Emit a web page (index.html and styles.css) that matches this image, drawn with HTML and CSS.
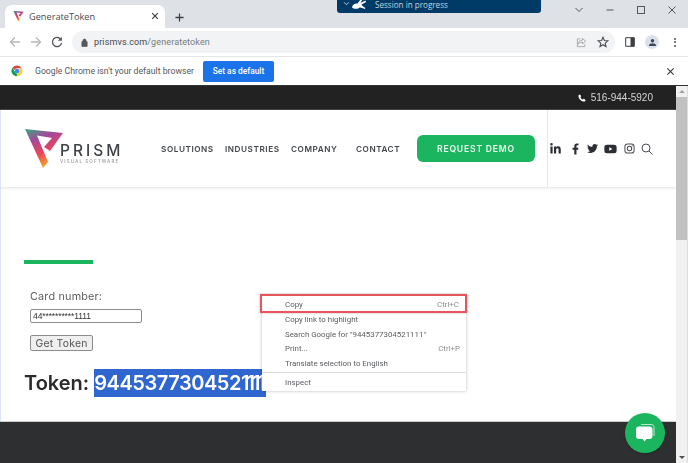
FILE: index.html
```html
<!DOCTYPE html>
<html lang="en">
<head>
<meta charset="utf-8">
<title>GenerateToken</title>
<link rel="stylesheet" href="styles.css">
</head>
<body>
<div class="window">
  <header class="tabstrip">
    <div class="tab">
      <svg class="favicon" viewBox="24 128 40 41"><defs><linearGradient id="fav" x1="0.1" y1="0" x2="0.5" y2="1"><stop offset="0" stop-color="#3fa17c"/><stop offset="0.3" stop-color="#a5489c"/><stop offset="0.65" stop-color="#e9465a"/><stop offset="1" stop-color="#f8ac25"/></linearGradient></defs><path fill="url(#fav)" d="M25 129L63 133L50 151L44 147L52 138L37 135.5L48 162L43 168Z"/></svg>
      <span class="tab-title">GenerateToken</span>
      <svg class="tab-close" viewBox="0 0 10 10"><path d="M1.5 1.5L8.5 8.5M8.5 1.5L1.5 8.5"/></svg>
    </div>
    <svg class="new-tab" viewBox="0 0 10 10"><path d="M5 0.5V9.5M0.5 5H9.5"/></svg>
    <div class="win-controls">
      <svg class="win-icon" viewBox="0 0 10 10"><path d="M1.5 3L5 6.5L8.5 3"/></svg>
      <svg class="win-icon" viewBox="0 0 10 10"><path d="M1.5 5H8.5"/></svg>
      <svg class="win-icon" viewBox="0 0 10 10"><rect x="1.5" y="1.5" width="7" height="7"/></svg>
      <svg class="win-icon" viewBox="0 0 10 10"><path d="M1.5 1.5L8.5 8.5M8.5 1.5L1.5 8.5"/></svg>
    </div>
  </header>

  <div class="session">
    <svg class="session-chev" viewBox="0 0 8 6"><path d="M1 1.5L4 4.5L7 1.5"/></svg>
    <svg class="session-icon" viewBox="0 0 14 10"><path d="M0 8.5C0.5 5.5 3 4 5.5 4.5L9 0L10.5 0.5L8.5 4L13.5 1.5L14 3L9.5 5.5C10 7 12 8 13.5 9L12.5 10C10.5 9 9 8.5 7.5 8.5C7 10 1.5 10.5 0 8.5Z"/></svg>
    <span>Session in progress</span>
  </div>

  <nav class="toolbar">
    <svg class="tb-icon faint" viewBox="0 0 12 12"><path d="M11 6H1.5M6 1.5L1.5 6L6 10.5"/></svg>
    <svg class="tb-icon faint" viewBox="0 0 12 12"><path d="M1 6H10.5M6 1.5L10.5 6L6 10.5"/></svg>
    <svg class="tb-icon dark" viewBox="0 0 12 12"><path d="M10.2 4A4.6 4.6 0 1 0 10.6 6.8"/><path class="solid" d="M10.8 0.8V4.8H6.8Z"/></svg>
    <div class="omnibox">
      <svg class="lock" viewBox="0 0 8 10"><path d="M1 4H7V9.5H1Z M2.2 4V2.8A1.8 1.8 0 0 1 5.8 2.8V4" /></svg>
      <span class="url"><span class="host">prismvs.com</span>/generatetoken</span>
      <svg class="omni-share" viewBox="0 0 12 12"><path d="M7 1.5L10.5 4.5L7 7.5V5.6C4.5 5.6 3.2 6.5 2.2 8C2.4 5.3 4 3.6 7 3.4ZM4.5 2H1.5V10.5H9.5V8"/></svg>
      <svg class="omni-star" viewBox="0 0 12 12"><path d="M6 1.3L7.4 4.5L10.8 4.8L8.2 7.1L9 10.5L6 8.7L3 10.5L3.8 7.1L1.2 4.8L4.6 4.5Z"/></svg>
    </div>
    <div class="tb-right">
      <svg class="panel" viewBox="0 0 10 10"><path d="M0.7 0.7H9.3V9.3H0.7Z"/><path class="solid" d="M5.5 0.7H9.3V9.3H5.5Z"/></svg>
      <div class="avatar"><svg viewBox="0 0 10 10"><circle cx="5" cy="3.1" r="2"/><path d="M1 9C1 6.5 3 5.8 5 5.8S9 6.5 9 9Z"/></svg></div>
      <div class="kebab"><i></i><i></i><i></i></div>
    </div>
  </nav>

  <aside class="infobar">
    <svg class="chrome" viewBox="0 0 24 24">
      <path fill="#db4437" d="M12 1A11 11 0 0 1 21.5 6.5H12A5.5 5.5 0 0 0 6.8 10.2L3.2 5.3A11 11 0 0 1 12 1Z"/>
      <path fill="#0f9d58" d="M3.2 5.3L8 13.8A5.5 5.5 0 0 0 13.6 17.3L10.6 22.9A11 11 0 0 1 3.2 5.3Z"/>
      <path fill="#ffcd40" d="M21.5 6.5A11 11 0 0 1 10.6 22.9L15.4 14.5A5.5 5.5 0 0 0 15.6 8Z"/>
      <circle cx="12" cy="12" r="4.4" fill="#4285f4"/>
    </svg>
    <span class="info-text">Google Chrome isn't your default browser</span>
    <button class="set-default">Set as default</button>
    <svg class="info-close" viewBox="0 0 10 10"><path d="M1.5 1.5L8.5 8.5M8.5 1.5L1.5 8.5"/></svg>
  </aside>

  <div class="viewport">
    <div class="page">
      <div class="topbar">
        <svg class="phone" viewBox="0 0 10 10"><path d="M2.5 0.5L4 2.8L3 4C3.6 5.2 4.8 6.4 6 7L7.2 6L9.5 7.5C9.3 8.6 8.5 9.5 7.5 9.5C4 9.2 0.8 6 0.5 2.5C0.5 1.5 1.4 0.7 2.5 0.5Z"/></svg>
        <span>516-944-5920</span>
      </div>
      <div class="nav">
        <div class="logo">
          <svg class="logo-mark" viewBox="24 128 40 41"><defs><linearGradient id="lg" x1="0.1" y1="0" x2="0.5" y2="1"><stop offset="0" stop-color="#3fa17c"/><stop offset="0.3" stop-color="#a5489c"/><stop offset="0.65" stop-color="#e9465a"/><stop offset="1" stop-color="#f8ac25"/></linearGradient></defs><path fill="url(#lg)" d="M25 129L63 133L50 151L44 147L52 138L37 135.5L48 162L43 168Z"/></svg>
          <div class="logo-text">
            <div class="logo-name">PRISM</div>
            <div class="logo-sub">VISUAL SOFTWARE</div>
          </div>
        </div>
        <ul class="menu">
          <li class="m-solutions">SOLUTIONS</li>
          <li class="m-industries">INDUSTRIES</li>
          <li class="m-company">COMPANY</li>
          <li class="m-contact">CONTACT</li>
        </ul>
        <a class="demo">REQUEST DEMO</a>
        <div class="socials">
          <svg class="s-in" viewBox="0 0 448 512"><path d="M100.28 448H7.4V148.9h92.88zM53.79 108.1C24.09 108.1 0 83.5 0 53.8a53.79 53.79 0 0 1 107.58 0c0 29.7-24.1 54.3-53.79 54.3zM447.9 448h-92.68V302.4c0-34.7-.7-79.2-48.29-79.2-48.29 0-55.69 37.7-55.69 76.7V448h-92.78V148.9h89.08v40.8h1.3c12.4-23.5 42.69-48.3 87.88-48.3 94 0 111.28 61.9 111.28 142.3V448z"/></svg>
          <svg class="s-f" viewBox="0 0 320 512"><path d="M279.14 288l14.22-92.66h-88.91v-60.13c0-25.35 12.42-50.06 52.24-50.06h40.42V6.26S260.43 0 225.36 0c-73.22 0-121.08 44.38-121.08 124.72v70.62H22.89V288h81.39v224h100.17V288z"/></svg>
          <svg class="s-tw" viewBox="0 0 512 512"><path d="M459.37 151.716c.325 4.548.325 9.097.325 13.645 0 138.72-105.583 298.558-298.558 298.558-59.452 0-114.68-17.219-161.137-47.106 8.447.974 16.568 1.299 25.34 1.299 49.055 0 94.213-16.568 130.274-44.832-46.132-.975-84.792-31.188-98.112-72.772 6.498.974 12.995 1.624 19.818 1.624 9.421 0 18.843-1.3 27.614-3.573-48.081-9.747-84.143-51.98-84.143-102.985v-1.299c13.969 7.797 30.214 12.67 47.431 13.319-28.264-18.843-46.781-51.005-46.781-87.391 0-19.492 5.197-37.36 14.294-52.954 51.655 63.675 129.3 105.258 216.365 109.807-1.624-7.797-2.599-15.918-2.599-24.04 0-57.828 46.782-104.934 104.934-104.934 30.213 0 57.502 12.67 76.67 33.137 23.715-4.548 46.456-13.32 66.599-25.34-7.798 24.366-24.366 44.833-46.132 57.827 21.117-2.273 41.584-8.122 60.426-16.243-14.292 20.791-32.161 39.308-52.628 54.253z"/></svg>
          <svg class="s-yt" viewBox="0 0 576 512"><path d="M549.655 124.083c-6.281-23.65-24.787-42.276-48.284-48.597C458.781 64 288 64 288 64S117.22 64 74.629 75.486c-23.497 6.322-42.003 24.947-48.284 48.597-11.412 42.867-11.412 132.305-11.412 132.305s0 89.438 11.412 132.305c6.281 23.65 24.787 41.5 48.284 47.821C117.22 448 288 448 288 448s170.78 0 213.371-11.486c23.497-6.321 42.003-24.171 48.284-47.821 11.412-42.867 11.412-132.305 11.412-132.305s0-89.438-11.412-132.305zm-317.51 213.508V175.185l142.739 81.205-142.739 81.201z"/></svg>
          <svg class="s-ig" viewBox="0 0 12 12"><rect x="1" y="1" width="10" height="10" rx="2.8"/><circle cx="6" cy="6" r="2.4"/><circle class="dot" cx="8.9" cy="3.1" r="0.6"/></svg>
          <svg class="s-search" viewBox="0 0 12 12"><circle cx="5" cy="5" r="4"/><path d="M8 8L11.5 11.5"/></svg>
        </div>
      </div>
      <main class="content">
        <div class="rule"></div>
        <form class="card-form">
          <label class="card-label" for="card">Card number:</label>
          <input class="card-input" id="card" value="44**********1111">
          <button class="get-token" type="button">Get Token</button>
        </form>
        <h2 class="token">Token: <span class="token-value">944537730452<span class="ones">1111</span></span></h2>
      </main>
      <footer class="footer"></footer>
    </div>
    <div class="scrollbar">
      <span class="arrow up"></span>
      <span class="thumb"></span>
      <span class="arrow down"></span>
    </div>
  </div>

  <div class="context-menu">
    <div class="ctx-row ctx-copy"><span>Copy</span><span class="shortcut">Ctrl+C</span></div>
    <div class="ctx-row"><span>Copy link to highlight</span></div>
    <div class="ctx-row"><span>Search Google for "9445377304521111"</span></div>
    <div class="ctx-row"><span>Print...</span><span class="shortcut">Ctrl+P</span></div>
    <div class="ctx-row"><span>Translate selection to English</span></div>
    <div class="ctx-sep"></div>
    <div class="ctx-row"><span>Inspect</span></div>
  </div>

  <div class="chat">
    <svg viewBox="0 0 24 24"><path class="back" d="M8 3.5H18C20 3.5 21 4.5 21 6.5V15"/><path class="front" d="M6 5.5H16.5C18.3 5.5 19.5 6.7 19.5 8.5V15C19.5 17 18.3 18 16.5 18H13.5L11.5 20.5L9.5 18H6C4 18 3 17 3 15V8.5C3 6.7 4.2 5.5 6 5.5Z"/></svg>
  </div>
</div>
</body>
</html>
```
FILE: styles.css
```css
* { box-sizing: border-box; }
html, body { margin: 0; padding: 0; }
body { width: 688px; height: 463px; overflow: hidden; background: #fff; }
svg { display: block; flex: none; }

.window {
  position: relative;
  width: 688px;
  height: 463px;
  overflow: hidden;
  display: flex;
  flex-direction: column;
  font-family: "Open Sans", "Liberation Sans", sans-serif;
  filter: blur(0.35px);
}

/* tab strip */
.tabstrip { height: 28px; flex: none; background: #dee1e6; display: flex; align-items: flex-end; padding-left: 5px; position: relative; }
.tab { width: 160px; height: 23px; background: #fff; border-radius: 7px 7px 0 0; display: flex; align-items: center; padding: 0 6px 1px 8px; }
.favicon { width: 11px; height: 12px; }
.tab-title { margin-left: 5px; font-size: 9.2px; color: #4a4c50; flex: 1; }
.tab-close { width: 8px; height: 8px; fill: none; stroke: #3c4043; stroke-width: 1.5; }
.new-tab { width: 9px; height: 9px; margin: 0 0 6px 10px; fill: none; stroke: #3c4043; stroke-width: 1.4; }
.win-controls { margin-left: auto; align-self: flex-start; display: flex; gap: 21px; padding: 5px 11px 0 0; }
.win-icon { width: 10px; height: 10px; fill: none; stroke: #55585c; stroke-width: 1; }

/* remote session banner */
.session { position: absolute; left: 337px; top: 0; width: 204px; height: 13px; background: #003a66; border-radius: 0 0 3px 3px; display: flex; align-items: center; padding-left: 6px; color: #c6d4df; font-size: 8.1px; }
.session-chev { width: 7px; height: 5px; fill: none; stroke: #dfe6ec; stroke-width: 1; margin-top: -6px; }
.session-icon { width: 14px; height: 10px; fill: #fff; margin: -6px 9px 0 2px; }
.session span { margin-top: -5px; }

/* toolbar */
.toolbar { height: 29px; flex: none; background: #fff; border-bottom: 1px solid #e3e5e8; display: flex; align-items: center; padding: 0 10px 0 9px; }
.tb-icon { width: 12px; height: 12px; fill: none; stroke-width: 1.3; margin-right: 9px; }
.tb-icon.faint { stroke: #b4b7bb; }
.tb-icon.dark { stroke: #55585c; margin-right: 9px; }
.tb-icon .solid { fill: #55585c; stroke: none; }
.omnibox { width: 543px; height: 22px; background: #f1f3f4; border-radius: 11px; display: flex; align-items: center; padding: 0 6px 0 9px; }
.lock { width: 7px; height: 9px; fill: #55585c; stroke: #55585c; stroke-width: 0.8; }
.url { margin-left: 6px; font-family: Roboto, sans-serif; font-size: 9px; letter-spacing: 0.12px; color: #777b80; flex: 1; }
.host { color: #45484c; }
.omni-share { width: 11px; height: 11px; fill: none; stroke: #9b9ea3; stroke-width: 0.9; margin-right: 10px; }
.omni-star { width: 12px; height: 12px; fill: none; stroke: #4d5054; stroke-width: 1.1; }
.tb-right { display: flex; align-items: center; margin-left: 10px; flex: 1; }
.panel { width: 10px; height: 10px; fill: none; stroke: #3c4043; stroke-width: 1; }
.panel .solid { fill: #3c4043; stroke: none; }
.avatar { width: 14px; height: 14px; border-radius: 50%; background: #dbe0ea; margin-left: 10px; display: flex; align-items: center; justify-content: center; }
.avatar svg { width: 9px; height: 9px; fill: #3c4a5c; }
.kebab { margin-left: 15px; display: flex; flex-direction: column; gap: 1.5px; }
.kebab i { display: block; width: 2px; height: 2px; border-radius: 50%; background: #4d5054; }

/* infobar */
.infobar { height: 29px; flex: none; background: #fff; display: flex; align-items: center; padding: 0 13px 0 11px; border-bottom: 1px solid #333; }
.chrome { width: 12px; height: 12px; }
.info-text { margin-left: 12px; font-family: Roboto, sans-serif; font-size: 8.7px; color: #55585c; }
.set-default { margin-left: 9px; width: 71px; height: 21px; border: 0; border-radius: 2px; background: #1a73e8; color: #fff; font: 500 8.4px Roboto, sans-serif; padding: 0; }
.info-close { margin-left: auto; width: 9px; height: 9px; fill: none; stroke: #3c4043; stroke-width: 1.3; }

/* page */
.viewport { flex: 1; display: flex; min-height: 0; }
.page { flex: 1; min-width: 0; display: flex; flex-direction: column; font-family: Inter, "Open Sans", sans-serif; }
.topbar { height: 24px; flex: none; background: #222; border-bottom: 1px solid #444; display: flex; align-items: center; justify-content: flex-end; padding-right: 23px; color: #d4d4d4; font-family: "Liberation Sans", sans-serif; font-size: 10px; }
.phone { width: 8px; height: 8px; fill: #fff; margin-right: 5px; }
.nav { height: 77px; flex: none; background: #fff; display: flex; align-items: center; position: relative; box-shadow: 0 1px 3px rgba(0,0,0,.12); padding-left: 23px; border-left: 1px solid #dbe7f5; }
.logo { display: flex; align-items: flex-end; height: 40px; }
.logo-mark { width: 40px; height: 41px; }
.logo-text { margin-left: -4px; padding-bottom: 4px; width: 59px; }
.logo-name { font-size: 15.5px; font-weight: 500; letter-spacing: 3px; line-height: 15px; color: #3f4348; white-space: nowrap; }
.logo-sub { font-size: 4.5px; font-weight: 600; letter-spacing: 1.1px; line-height: 7px; color: #a2a5a9; white-space: nowrap; }
.menu { list-style: none; display: flex; margin: 0 0 0 42px; padding: 0; font-size: 8.2px; font-weight: 600; letter-spacing: 0.55px; color: #43464a; }
.m-solutions { width: 64px; }
.m-industries { width: 66px; }
.m-company { width: 65px; }
.m-contact { width: 61px; }
.demo { width: 118px; height: 27px; background: #1cb55f; border-radius: 6px; color: #e9f7ef; font-size: 8.6px; font-weight: 600; letter-spacing: 0.8px; display: flex; align-items: center; justify-content: center; }
.socials { margin-left: 12px; align-self: stretch; border-left: 1px solid #e6e6e6; display: flex; align-items: center; padding-left: 1px; fill: #2c2e33; }
.s-in { width: 11px; height: 12px; margin-left: 1px; }
.s-f { width: 7px; height: 12px; margin-left: 11px; }
.s-tw { width: 11px; height: 11px; margin-left: 8px; }
.s-yt { width: 13px; height: 12px; margin-left: 6px; }
.s-ig { width: 11px; height: 11px; margin-left: 7px; fill: none; stroke: #4a4c50; stroke-width: 1.1; }
.s-ig .dot { fill: #4a4c50; stroke: none; }
.s-search { width: 12px; height: 12px; margin-left: 6px; fill: none; stroke: #4a4c50; stroke-width: 1; }

.content { height: 234px; flex: none; background: #fff; padding: 73px 0 0 23px; color: #2b2b2b; border-left: 1px solid #dbe7f5; }
.rule { width: 69px; height: 4px; background: #1cb55f; }
.card-form { display: flex; flex-direction: column; align-items: flex-start; padding: 26px 0 0 6px; }
.card-label { font-size: 10.8px; letter-spacing: 0.2px; line-height: 13px; color: #5d5d5d; }
.card-input { width: 112px; height: 14px; margin-top: 6px; border: 1px solid #8c8c8c; border-radius: 2px; padding: 0 2px; font: 8.6px "Liberation Sans", sans-serif; letter-spacing: -0.15px; color: #333; background: #fff; outline: 0; }
.get-token { width: 63px; height: 16px; margin-top: 12px; padding: 0; border: 1px solid #8c8c8c; border-radius: 2px; background: #efefef; color: #555; font: 10.4px Inter, sans-serif; letter-spacing: 0.25px; }
.token { margin: 18px 0 0; font-size: 20px; font-weight: 600; line-height: 28px; color: #2b2b2b; white-space: nowrap; }
.token-value { background: #2f66d0; color: #fff; display: inline-block; letter-spacing: -0.45px; vertical-align: top; }
.ones { letter-spacing: -3px; padding-right: 3px; }
.footer { flex: 1; background: #2e2f31; border-top: 1px solid #ccc; }

.scrollbar { width: 12px; flex: none; background: #f1f1f1; border-right: 1px solid #cfe0f2; display: flex; flex-direction: column; align-items: center; padding: 4px 0; position: relative; }
.thumb { width: 11px; height: 143px; background: #c1c1c1; margin-top: 4px; }
.arrow { width: 0; height: 0; border-left: 3px solid transparent; border-right: 3px solid transparent; flex: none; }
.arrow.up { border-bottom: 3px solid #a3a3a3; }
.arrow.down { border-top: 3px solid #505050; margin-top: auto; }

/* context menu */
.context-menu { position: absolute; left: 262px; top: 296px; width: 204px; height: 95px; background: #fff; box-shadow: 0 0 3px rgba(0,0,0,.28); font-family: Roboto, sans-serif; font-size: 7.9px; color: #5a5c60; display: flex; flex-direction: column; }
.ctx-row { height: 14.6px; flex: none; display: flex; justify-content: space-between; align-items: center; padding: 0 6px 0 23px; }
.shortcut { color: #8a8c90; }
.ctx-copy { margin: -2px -1px -0.5px -2px; height: 19px; padding: 2.5px 6px 0 23px; border: 2px solid #e8555c; box-shadow: 0 0 2px rgba(0,0,0,.3); background: #fff; }
.ctx-sep { height: 1px; background: #dcdcdc; margin: 1.5px 0 1.8px; flex: none; }

/* chat launcher */
.chat { position: absolute; left: 625px; top: 413px; width: 40px; height: 40px; border-radius: 50%; background: #1cb55f; display: flex; align-items: center; justify-content: center; box-shadow: 0 1px 3px rgba(0,0,0,.2); }
.chat svg { width: 24px; height: 24px; }
.chat .back { fill: none; stroke: #bde8cf; stroke-width: 1; }
.chat .front { fill: #fff; }
```
